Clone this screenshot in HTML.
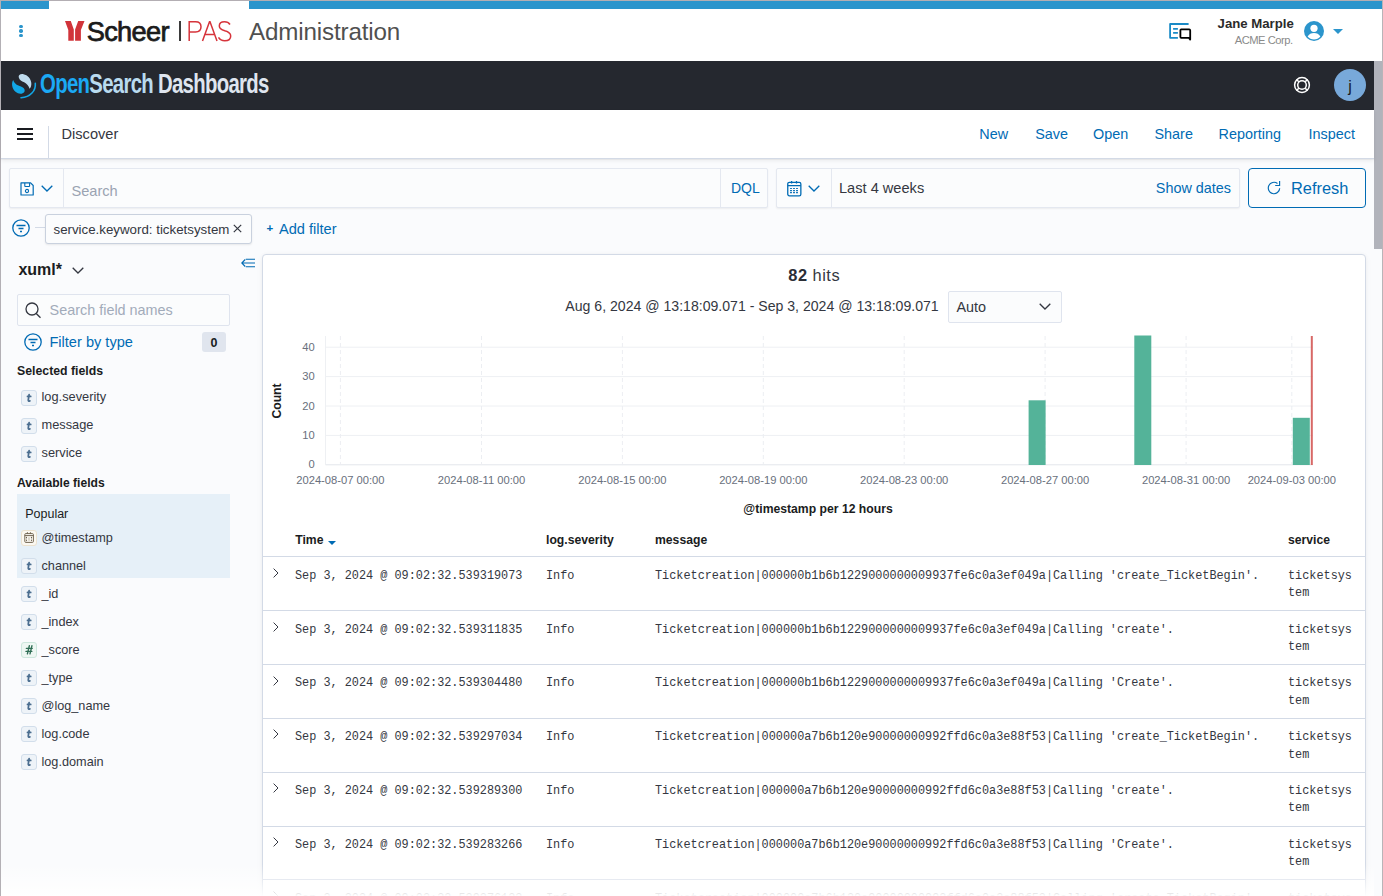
<!DOCTYPE html>
<html><head><meta charset="utf-8"><title>Discover - OpenSearch Dashboards</title>
<style>
html,body{margin:0;padding:0;}
body{width:1383px;height:896px;overflow:hidden;position:relative;background:#fafbfd;font-family:"Liberation Sans", sans-serif;}
.t{position:absolute;white-space:pre;line-height:1;}
.b{position:absolute;box-sizing:border-box;}
svg.b{overflow:visible;}
</style></head><body>
<div class="b" style="left:0.00px;top:0.00px;width:1383.00px;height:61.00px;background:#fff;"></div>
<div class="b" style="left:0.00px;top:0.00px;width:1383.00px;height:1.00px;background:#b3aeb3;"></div>
<div class="b" style="left:0.00px;top:0.00px;width:1.00px;height:896.00px;background:#b3b0b5;"></div>
<div class="b" style="left:1.00px;top:1.00px;width:48.00px;height:8.00px;background:#2b95cc;"></div>
<div class="b" style="left:249.00px;top:1.00px;width:1133.00px;height:8.00px;background:#2b95cc;"></div>
<div class="b" style="left:19.30px;top:24.90px;width:3.40px;height:3.40px;background:#2b95cc;border-radius:50%;"></div>
<div class="b" style="left:19.30px;top:29.20px;width:3.40px;height:3.40px;background:#2b95cc;border-radius:50%;"></div>
<div class="b" style="left:19.30px;top:33.50px;width:3.40px;height:3.40px;background:#2b95cc;border-radius:50%;"></div>
<svg class="b" style="left:62.00px;top:18.00px;" width="28" height="26" viewBox="0 0 28 26"><path d="M3 3H8.8L11.8 11.5V22.8H6.3V12Z M16.2 3H22.5L18.9 12V22.8H13.1V11.5Z" fill="#d1343a"/></svg>
<div class="t" style="left:86.80px;top:17.97px;font-size:27.20px;color:#1b1b1b;font-weight:400;font-family:'Liberation Sans', sans-serif;letter-spacing:-0.70px;-webkit-text-stroke:0.75px #1b1b1b;">Scheer</div>
<div class="b" style="left:179.00px;top:21.00px;width:1.60px;height:20.00px;background:#3b3b3b;"></div>
<svg class="b" style="left:188.00px;top:21.00px;" width="44" height="20" viewBox="0 0 44 20"><g fill="none" stroke="#d6343b" stroke-width="1.5"><path d="M1.2 20V0.8H7.5C11.5 0.8 13 3 13 5.8C13 8.7 11.5 11 7.5 11H1.2"/><path d="M14.5 20L21.5 0.8H22L29 20M17.3 13.5H26.2"/><path d="M42 3.5C40.8 1.6 39 0.8 36.5 0.8C33.5 0.8 31.3 2.4 31.3 5C31.3 7.8 33.6 8.8 36.8 9.8C40.3 10.8 42.7 12 42.7 15C42.7 18 40.3 19.8 36.8 19.8C34 19.8 31.8 18.6 30.5 16.4"/></g></svg>
<div class="t" style="left:249.00px;top:19.91px;font-size:24.20px;color:#505050;font-weight:400;font-family:'Liberation Sans', sans-serif;letter-spacing:-0.15px;">Administration</div>
<svg class="b" style="left:1164.00px;top:18.00px;" width="32" height="26" viewBox="0 0 32 26"><path d="M24.6 6H6.1V19.8H13.9" fill="none" stroke="#1a8ac6" stroke-width="1.8" stroke-linejoin="round"/><path d="M9.1 10.9H13.9M9.1 14.9H13.9" stroke="#1a8ac6" stroke-width="1.8"/><path d="M17.2 11.4H25.2Q26.2 11.4 26.2 12.4V21.6L24.8 19.8H17.2Q16.4 19.8 16.4 19V12.2Q16.4 11.4 17.2 11.4Z" fill="none" stroke="#000" stroke-width="1.8" stroke-linejoin="round"/></svg>
<div class="t" style="left:1193.80px;width:100px;text-align:right;top:17.22px;font-size:13.20px;color:#2b2b2b;font-weight:700;font-family:'Liberation Sans', sans-serif;">Jane Marple</div>
<div class="t" style="left:1192.50px;width:100px;text-align:right;top:35.02px;font-size:11.20px;color:#8a8a8a;font-weight:400;font-family:'Liberation Sans', sans-serif;letter-spacing:-0.50px;">ACME Corp.</div>
<svg class="b" style="left:1304.00px;top:21.00px;" width="20" height="20" viewBox="0 0 20 20"><circle cx="10" cy="10" r="10" fill="#2b95cc"/><circle cx="10" cy="7.3" r="3.6" fill="#fff"/><path d="M3.6 15.6C5 13 7.2 12 10 12C12.8 12 15 13 16.4 15.6C14.8 17.4 12.5 18.5 10 18.5C7.5 18.5 5.2 17.4 3.6 15.6Z" fill="#fff"/></svg>
<svg class="b" style="left:1333.00px;top:29.00px;" width="10" height="5" viewBox="0 0 10 5"><path d="M0 0H10L5 5Z" fill="#2b95cc"/></svg>
<div class="b" style="left:1.00px;top:61.00px;width:1373.00px;height:49.00px;background:#25282f;"></div>
<svg class="b" style="left:8.00px;top:68.00px;" width="36" height="36" viewBox="0 0 36 36"><path d="M10.8 9.5C10 7 12.5 5.6 15.5 6.2C19.5 7 23 10.5 23.3 15C23.5 17.5 22.8 19.8 21.6 20.8C20.8 18 18.8 15.5 16.2 14.3C13.6 13.1 11.5 12 10.8 9.5Z" fill="#bfdcee"/><path d="M5.2 12C3.2 15 3.8 20.5 7.5 23.8C10.2 26.2 14.5 26.5 16.3 24C17.5 22 16 19.8 13.5 18.8C10.5 17.6 6.5 16.5 5.2 12Z" fill="#12a7e6"/><path d="M27.3 15.3C28 22.5 22.5 29.3 13 29.8" fill="none" stroke="#12a7e6" stroke-width="1.6" stroke-linecap="round"/></svg>
<div class="t" style="left:40.00px;top:70.54px;font-size:27.00px;color:#dfe5ef;font-weight:700;font-family:'Liberation Sans', sans-serif;letter-spacing:-0.90px;transform:scaleX(0.753);transform-origin:0 0;"><span style="color:#1ba9f5">Open</span><span style="color:#b9dbef">Search</span> <span style="color:#dfe5ef">Dashboards</span></div>
<svg class="b" style="left:1293.00px;top:76.00px;" width="18" height="18" viewBox="0 0 18 18"><g fill="none" stroke="#ffffff" stroke-width="1.5"><circle cx="9" cy="9" r="7.4"/><circle cx="9" cy="9" r="4.3"/><path d="M3.5 3.5L5.8 5.8M14.5 3.5L12.2 5.8M3.5 14.5L5.8 12.2M14.5 14.5L12.2 12.2"/></g></svg>
<div class="b" style="left:1334.00px;top:69.00px;width:32.00px;height:32.00px;background:#78a9da;border-radius:50%;"></div>
<div class="t" style="left:1340.00px;width:20px;text-align:center;top:78.75px;font-size:16.00px;color:#1a1c21;font-weight:400;font-family:'Liberation Sans', sans-serif;">j</div>
<div class="b" style="left:1374.00px;top:61.00px;width:8.00px;height:835.00px;background:#fafbfd;"></div>
<div class="b" style="left:1374.00px;top:61.00px;width:8.00px;height:188.00px;background:#b1b3bb;"></div>
<div class="b" style="left:1382.00px;top:0.00px;width:1.00px;height:896.00px;background:#b8b4b8;"></div>
<div class="b" style="left:1.00px;top:110.00px;width:1373.00px;height:49.00px;background:#fff;border-bottom:1px solid #d3dae6;box-shadow:0 2px 4px rgba(0,0,0,0.06),0 1px 1px rgba(0,0,0,0.04);"></div>
<div class="b" style="left:17.00px;top:128.00px;width:16.00px;height:2.00px;background:#1a1c21;"></div>
<div class="b" style="left:17.00px;top:133.00px;width:16.00px;height:2.00px;background:#1a1c21;"></div>
<div class="b" style="left:17.00px;top:138.00px;width:16.00px;height:2.00px;background:#1a1c21;"></div>
<div class="b" style="left:48.00px;top:126.00px;width:1.00px;height:32.00px;background:#d3dae6;"></div>
<div class="t" style="left:61.50px;top:126.54px;font-size:14.60px;color:#343741;font-weight:400;font-family:'Liberation Sans', sans-serif;">Discover</div>
<div class="t" style="left:979.30px;top:127.31px;font-size:14.40px;color:#006bb4;font-weight:400;font-family:'Liberation Sans', sans-serif;">New</div>
<div class="t" style="left:1035.20px;top:127.31px;font-size:14.40px;color:#006bb4;font-weight:400;font-family:'Liberation Sans', sans-serif;">Save</div>
<div class="t" style="left:1093.00px;top:127.31px;font-size:14.40px;color:#006bb4;font-weight:400;font-family:'Liberation Sans', sans-serif;">Open</div>
<div class="t" style="left:1154.50px;top:127.31px;font-size:14.40px;color:#006bb4;font-weight:400;font-family:'Liberation Sans', sans-serif;">Share</div>
<div class="t" style="left:1218.50px;top:127.31px;font-size:14.40px;color:#006bb4;font-weight:400;font-family:'Liberation Sans', sans-serif;">Reporting</div>
<div class="t" style="left:1308.50px;top:127.31px;font-size:14.40px;color:#006bb4;font-weight:400;font-family:'Liberation Sans', sans-serif;">Inspect</div>
<div class="b" style="left:9.00px;top:168.00px;width:759.00px;height:40.00px;background:#fbfcfd;border:1px solid #e4e8f0;box-shadow:0 1px 2px rgba(0,0,0,0.06);border-radius:2px;"></div>
<div class="b" style="left:63.00px;top:169.00px;width:1.00px;height:38.00px;background:#e4e8f0;"></div>
<div class="b" style="left:720.00px;top:169.00px;width:1.00px;height:38.00px;background:#e4e8f0;"></div>
<svg class="b" style="left:20.00px;top:182.00px;" width="15" height="15" viewBox="0 0 15 15"><path d="M1 0.9H10.6L13.2 3.5V13H1Z" fill="none" stroke="#006bb4" stroke-width="1.2" stroke-linejoin="round"/><path d="M4.8 0.9V3.9Q4.8 4.5 5.4 4.5H9Q9.6 4.5 9.6 3.9V0.9" fill="none" stroke="#006bb4" stroke-width="1.1"/><circle cx="7" cy="9" r="1.6" fill="none" stroke="#006bb4" stroke-width="1.1"/></svg>
<svg class="b" style="left:41.00px;top:184.70px;" width="12" height="7" viewBox="0 0 12 7"><path d="M0.7 0.7L6 6L11.3 0.7" fill="none" stroke="#006bb4" stroke-width="1.3"/></svg>
<div class="t" style="left:71.50px;top:184.04px;font-size:14.60px;color:#9aa3b2;font-weight:400;font-family:'Liberation Sans', sans-serif;">Search</div>
<div class="t" style="left:731.00px;top:181.45px;font-size:14.00px;color:#006bb4;font-weight:400;font-family:'Liberation Sans', sans-serif;">DQL</div>
<div class="b" style="left:776.00px;top:168.00px;width:464.00px;height:40.00px;background:#fbfcfd;border:1px solid #e4e8f0;box-shadow:0 1px 2px rgba(0,0,0,0.06);border-radius:2px;"></div>
<div class="b" style="left:830.50px;top:169.00px;width:1.00px;height:38.00px;background:#e4e8f0;"></div>
<svg class="b" style="left:787.00px;top:181.00px;" width="15" height="16" viewBox="0 0 15 16"><rect x="0.75" y="1.3" width="13.1" height="13.5" rx="1.6" fill="none" stroke="#006bb4" stroke-width="1.3"/><path d="M0.75 4.6H13.85M4.6 0V2.6M9.5 0V2.6" stroke="#006bb4" stroke-width="1.3"/><g fill="#006bb4"><rect x="3" y="6.9" width="2" height="1.2" rx="0.5"/><rect x="6" y="6.9" width="2" height="1.2" rx="0.5"/><rect x="9" y="6.9" width="2" height="1.2" rx="0.5"/><rect x="3" y="9" width="2" height="1.2" rx="0.5"/><rect x="6" y="9" width="2" height="1.2" rx="0.5"/><rect x="9" y="9" width="2" height="1.2" rx="0.5"/><rect x="3" y="11" width="2" height="1.2" rx="0.5"/><rect x="6" y="11" width="2" height="1.2" rx="0.5"/><rect x="9" y="11" width="2" height="1.2" rx="0.5"/></g></svg>
<svg class="b" style="left:808.00px;top:184.60px;" width="12" height="7" viewBox="0 0 12 7"><path d="M0.7 0.7L6 6L11.3 0.7" fill="none" stroke="#006bb4" stroke-width="1.3"/></svg>
<div class="t" style="left:839.00px;top:181.14px;font-size:14.60px;color:#343741;font-weight:400;font-family:'Liberation Sans', sans-serif;">Last 4 weeks</div>
<div class="t" style="left:1111.00px;width:120px;text-align:right;top:181.31px;font-size:14.40px;color:#006bb4;font-weight:400;font-family:'Liberation Sans', sans-serif;">Show dates</div>
<div class="b" style="left:1248.00px;top:168.00px;width:118.00px;height:40.00px;background:#fbfcfd;border:1px solid #006bb4;border-radius:4px;"></div>
<svg class="b" style="left:1267.00px;top:181.00px;" width="14" height="14" viewBox="0 0 14 14"><path d="M10.5 2.5A5.7 5.7 0 1 0 12.7 7.2" fill="none" stroke="#006bb4" stroke-width="1.15"/><path d="M12.6 0V4.5H8.2" fill="none" stroke="#006bb4" stroke-width="1.15"/></svg>
<div class="t" style="left:1291.00px;top:180.11px;font-size:16.40px;color:#006bb4;font-weight:400;font-family:'Liberation Sans', sans-serif;">Refresh</div>
<svg class="b" style="left:12.00px;top:219.00px;" width="18" height="18" viewBox="0 0 18 18"><circle cx="9" cy="9" r="8.2" fill="none" stroke="#006bb4" stroke-width="1.3"/><path d="M4.5 6.5H13.5M6.5 9.5H11.5M8 12.5H10" stroke="#006bb4" stroke-width="1.3"/></svg>
<div class="b" style="left:35.00px;top:227.00px;width:10.00px;height:1.00px;background:#d3dae6;"></div>
<div class="b" style="left:45.00px;top:214.00px;width:207.00px;height:30.00px;background:#fbfcfd;border:1px solid #c9d1de;border-radius:3px;box-shadow:0 1px 2px rgba(0,0,0,0.08);"></div>
<div class="t" style="left:53.50px;top:222.74px;font-size:13.30px;color:#343741;font-weight:400;font-family:'Liberation Sans', sans-serif;">service.keyword: ticketsystem</div>
<svg class="b" style="left:233.00px;top:224.00px;" width="9" height="9" viewBox="0 0 9 9"><path d="M0.8 0.8L8.2 8.2M8.2 0.8L0.8 8.2" stroke="#343741" stroke-width="1.2"/></svg>
<div class="t" style="left:266.50px;top:223.46px;font-size:11.50px;color:#006bb4;font-weight:700;font-family:'Liberation Sans', sans-serif;">+</div>
<div class="t" style="left:279.00px;top:221.64px;font-size:14.60px;color:#006bb4;font-weight:400;font-family:'Liberation Sans', sans-serif;">Add filter</div>
<div class="t" style="left:18.40px;top:262.45px;font-size:16.00px;color:#1a1c21;font-weight:700;font-family:'Liberation Sans', sans-serif;">xuml*</div>
<svg class="b" style="left:72.00px;top:267.00px;" width="12" height="7" viewBox="0 0 12 7"><path d="M0.7 0.7L6 6L11.3 0.7" fill="none" stroke="#343741" stroke-width="1.3"/></svg>
<svg class="b" style="left:241.00px;top:258.00px;" width="15" height="10" viewBox="0 0 15 10"><path d="M4.2 1.5L0.8 5L4.2 8.5M0.8 5H14M4.8 1.2H14M4.8 8.8H14" fill="none" stroke="#006bb4" stroke-width="1.1"/></svg>
<div class="b" style="left:17.00px;top:294.00px;width:213.00px;height:32.00px;background:#fbfcfd;border:1px solid #dfe4ee;border-radius:2px;"></div>
<svg class="b" style="left:25.00px;top:302.00px;" width="17" height="17" viewBox="0 0 17 17"><circle cx="7" cy="7" r="6" fill="none" stroke="#343741" stroke-width="1.3"/><path d="M11.2 11.5L15.5 15.8" stroke="#343741" stroke-width="1.3"/></svg>
<div class="t" style="left:49.60px;top:302.81px;font-size:14.40px;color:#a2abba;font-weight:400;font-family:'Liberation Sans', sans-serif;">Search field names</div>
<svg class="b" style="left:24.00px;top:333.00px;" width="18" height="18" viewBox="0 0 18 18"><circle cx="9" cy="9" r="8.2" fill="none" stroke="#006bb4" stroke-width="1.3"/><path d="M4.5 6.5H13.5M6.5 9.5H11.5M8 12.5H10" stroke="#006bb4" stroke-width="1.3"/></svg>
<div class="t" style="left:49.40px;top:334.74px;font-size:14.60px;color:#006bb4;font-weight:400;font-family:'Liberation Sans', sans-serif;">Filter by type</div>
<div class="b" style="left:202.00px;top:332.00px;width:24.00px;height:20.00px;background:#e0e5ee;border-radius:3px;"></div>
<div class="t" style="left:204.00px;width:20px;text-align:center;top:336.72px;font-size:12.50px;color:#1a1c21;font-weight:700;font-family:'Liberation Sans', sans-serif;">0</div>
<div class="t" style="left:17.00px;top:365.19px;font-size:12.30px;color:#1a1c21;font-weight:700;font-family:'Liberation Sans', sans-serif;">Selected fields</div>
<div class="t" style="left:17.00px;top:477.15px;font-size:12.10px;color:#1a1c21;font-weight:700;font-family:'Liberation Sans', sans-serif;">Available fields</div>
<div class="b" style="left:17.00px;top:494.00px;width:213.00px;height:84.00px;background:#e6f0f8;"></div>
<div class="t" style="left:25.20px;top:508.32px;font-size:12.50px;color:#1a1c21;font-weight:400;font-family:'Liberation Sans', sans-serif;">Popular</div>
<div class="b" style="left:21.00px;top:390.00px;width:16.00px;height:16.00px;background:#eef3f8;border:1px solid #d2deeb;border-radius:3px;"></div>
<svg class="b" style="left:21.00px;top:390.00px;" width="16" height="16" viewBox="0 0 16 16"><path d="M8.1 4.6L7.3 9.8Q7.1 11.5 8.9 10.9M6.5 6.4H9.7" fill="none" stroke="#4a6d8f" stroke-width="1.75" stroke-linecap="round" stroke-linejoin="round"/></svg>
<div class="t" style="left:41.50px;top:391.26px;font-size:12.80px;color:#343741;font-weight:400;font-family:'Liberation Sans', sans-serif;">log.severity</div>
<div class="b" style="left:21.00px;top:418.00px;width:16.00px;height:16.00px;background:#eef3f8;border:1px solid #d2deeb;border-radius:3px;"></div>
<svg class="b" style="left:21.00px;top:418.00px;" width="16" height="16" viewBox="0 0 16 16"><path d="M8.1 4.6L7.3 9.8Q7.1 11.5 8.9 10.9M6.5 6.4H9.7" fill="none" stroke="#4a6d8f" stroke-width="1.75" stroke-linecap="round" stroke-linejoin="round"/></svg>
<div class="t" style="left:41.50px;top:419.26px;font-size:12.80px;color:#343741;font-weight:400;font-family:'Liberation Sans', sans-serif;">message</div>
<div class="b" style="left:21.00px;top:446.00px;width:16.00px;height:16.00px;background:#eef3f8;border:1px solid #d2deeb;border-radius:3px;"></div>
<svg class="b" style="left:21.00px;top:446.00px;" width="16" height="16" viewBox="0 0 16 16"><path d="M8.1 4.6L7.3 9.8Q7.1 11.5 8.9 10.9M6.5 6.4H9.7" fill="none" stroke="#4a6d8f" stroke-width="1.75" stroke-linecap="round" stroke-linejoin="round"/></svg>
<div class="t" style="left:41.50px;top:447.26px;font-size:12.80px;color:#343741;font-weight:400;font-family:'Liberation Sans', sans-serif;">service</div>
<div class="b" style="left:21.00px;top:530.00px;width:16.00px;height:16.00px;background:#fbf8f1;border:1px solid #ece2cf;border-radius:3px;"></div>
<svg class="b" style="left:21.00px;top:530.00px;" width="16" height="16" viewBox="0 0 16 16"><rect x="3.8" y="3.6" width="8.6" height="8.8" rx="1" fill="none" stroke="#6b604c" stroke-width="0.95"/><path d="M3.8 5.6H12.4M6.4 2.2V3.8M9.4 2.2V3.8" stroke="#6b604c" stroke-width="0.95"/><path d="M5.5 7.4V10.6M10.5 7.4V10.6" stroke="#6b604c" stroke-width="0.6" opacity="0.6"/><path d="M8 7.2V10.8" stroke="#a39a8a" stroke-width="1.4" opacity="0.5"/><g fill="#6b604c"><circle cx="5.5" cy="7.4" r="0.6"/><circle cx="10.5" cy="7.4" r="0.6"/><circle cx="5.5" cy="10.6" r="0.6"/><circle cx="10.5" cy="10.6" r="0.6"/></g></svg>
<div class="t" style="left:41.50px;top:531.55px;font-size:12.70px;color:#343741;font-weight:400;font-family:'Liberation Sans', sans-serif;">@timestamp</div>
<div class="b" style="left:21.00px;top:558.00px;width:16.00px;height:16.00px;background:#eef3f8;border:1px solid #d2deeb;border-radius:3px;"></div>
<svg class="b" style="left:21.00px;top:558.00px;" width="16" height="16" viewBox="0 0 16 16"><path d="M8.1 4.6L7.3 9.8Q7.1 11.5 8.9 10.9M6.5 6.4H9.7" fill="none" stroke="#4a6d8f" stroke-width="1.75" stroke-linecap="round" stroke-linejoin="round"/></svg>
<div class="t" style="left:41.50px;top:559.55px;font-size:12.70px;color:#343741;font-weight:400;font-family:'Liberation Sans', sans-serif;">channel</div>
<div class="b" style="left:21.00px;top:586.00px;width:16.00px;height:16.00px;background:#eef3f8;border:1px solid #d2deeb;border-radius:3px;"></div>
<svg class="b" style="left:21.00px;top:586.00px;" width="16" height="16" viewBox="0 0 16 16"><path d="M8.1 4.6L7.3 9.8Q7.1 11.5 8.9 10.9M6.5 6.4H9.7" fill="none" stroke="#4a6d8f" stroke-width="1.75" stroke-linecap="round" stroke-linejoin="round"/></svg>
<div class="t" style="left:41.50px;top:587.55px;font-size:12.70px;color:#343741;font-weight:400;font-family:'Liberation Sans', sans-serif;">_id</div>
<div class="b" style="left:21.00px;top:614.00px;width:16.00px;height:16.00px;background:#eef3f8;border:1px solid #d2deeb;border-radius:3px;"></div>
<svg class="b" style="left:21.00px;top:614.00px;" width="16" height="16" viewBox="0 0 16 16"><path d="M8.1 4.6L7.3 9.8Q7.1 11.5 8.9 10.9M6.5 6.4H9.7" fill="none" stroke="#4a6d8f" stroke-width="1.75" stroke-linecap="round" stroke-linejoin="round"/></svg>
<div class="t" style="left:41.50px;top:615.55px;font-size:12.70px;color:#343741;font-weight:400;font-family:'Liberation Sans', sans-serif;">_index</div>
<div class="b" style="left:21.00px;top:642.00px;width:16.00px;height:16.00px;background:#eef7f3;border:1px solid #cde7dd;border-radius:3px;"></div>
<svg class="b" style="left:21.00px;top:642.00px;" width="16" height="16" viewBox="0 0 16 16"><path d="M8.3 3.8L6.4 11.8M10.9 3.8L9 11.8M5.4 6.4H11.2M5 9.4H10.8" fill="none" stroke="#2f6e55" stroke-width="1.4" stroke-linecap="round"/></svg>
<div class="t" style="left:41.50px;top:643.55px;font-size:12.70px;color:#343741;font-weight:400;font-family:'Liberation Sans', sans-serif;">_score</div>
<div class="b" style="left:21.00px;top:670.00px;width:16.00px;height:16.00px;background:#eef3f8;border:1px solid #d2deeb;border-radius:3px;"></div>
<svg class="b" style="left:21.00px;top:670.00px;" width="16" height="16" viewBox="0 0 16 16"><path d="M8.1 4.6L7.3 9.8Q7.1 11.5 8.9 10.9M6.5 6.4H9.7" fill="none" stroke="#4a6d8f" stroke-width="1.75" stroke-linecap="round" stroke-linejoin="round"/></svg>
<div class="t" style="left:41.50px;top:671.55px;font-size:12.70px;color:#343741;font-weight:400;font-family:'Liberation Sans', sans-serif;">_type</div>
<div class="b" style="left:21.00px;top:698.00px;width:16.00px;height:16.00px;background:#eef3f8;border:1px solid #d2deeb;border-radius:3px;"></div>
<svg class="b" style="left:21.00px;top:698.00px;" width="16" height="16" viewBox="0 0 16 16"><path d="M8.1 4.6L7.3 9.8Q7.1 11.5 8.9 10.9M6.5 6.4H9.7" fill="none" stroke="#4a6d8f" stroke-width="1.75" stroke-linecap="round" stroke-linejoin="round"/></svg>
<div class="t" style="left:41.50px;top:699.55px;font-size:12.70px;color:#343741;font-weight:400;font-family:'Liberation Sans', sans-serif;">@log_name</div>
<div class="b" style="left:21.00px;top:726.00px;width:16.00px;height:16.00px;background:#eef3f8;border:1px solid #d2deeb;border-radius:3px;"></div>
<svg class="b" style="left:21.00px;top:726.00px;" width="16" height="16" viewBox="0 0 16 16"><path d="M8.1 4.6L7.3 9.8Q7.1 11.5 8.9 10.9M6.5 6.4H9.7" fill="none" stroke="#4a6d8f" stroke-width="1.75" stroke-linecap="round" stroke-linejoin="round"/></svg>
<div class="t" style="left:41.50px;top:727.55px;font-size:12.70px;color:#343741;font-weight:400;font-family:'Liberation Sans', sans-serif;">log.code</div>
<div class="b" style="left:21.00px;top:754.00px;width:16.00px;height:16.00px;background:#eef3f8;border:1px solid #d2deeb;border-radius:3px;"></div>
<svg class="b" style="left:21.00px;top:754.00px;" width="16" height="16" viewBox="0 0 16 16"><path d="M8.1 4.6L7.3 9.8Q7.1 11.5 8.9 10.9M6.5 6.4H9.7" fill="none" stroke="#4a6d8f" stroke-width="1.75" stroke-linecap="round" stroke-linejoin="round"/></svg>
<div class="t" style="left:41.50px;top:755.55px;font-size:12.70px;color:#343741;font-weight:400;font-family:'Liberation Sans', sans-serif;">log.domain</div>
<div class="b" style="left:262.00px;top:254.00px;width:1104.00px;height:700.00px;background:#fff;border:1px solid #d3dae6;border-radius:4px;box-shadow:0 0.9px 4px -1px rgba(0,0,0,0.06),0 2.6px 8px -1px rgba(0,0,0,0.05);"></div>
<div class="t" style="left:788.30px;top:267.11px;font-size:16.40px;color:#343741;font-weight:400;font-family:'Liberation Sans', sans-serif;letter-spacing:0.50px;"><b style="font-weight:700;color:#2b2e36">82</b> hits</div>
<div class="t" style="left:565.30px;top:299.46px;font-size:14.10px;color:#343741;font-weight:400;font-family:'Liberation Sans', sans-serif;">Aug 6, 2024 @ 13:18:09.071 - Sep 3, 2024 @ 13:18:09.071</div>
<div class="b" style="left:948.00px;top:291.00px;width:114.00px;height:32.00px;background:#fbfcfd;border:1px solid #dfe4ee;border-radius:2px;"></div>
<div class="t" style="left:956.50px;top:300.31px;font-size:14.40px;color:#343741;font-weight:400;font-family:'Liberation Sans', sans-serif;">Auto</div>
<svg class="b" style="left:1039.00px;top:303.00px;" width="12" height="7" viewBox="0 0 12 7"><path d="M0.7 0.7L6 6L11.3 0.7" fill="none" stroke="#343741" stroke-width="1.3"/></svg>
<svg class="b" style="left:0;top:0" width="1383" height="896" viewBox="0 0 1383 896"><path d="M325.5 347.2H1313.0" stroke="#eef0f3" stroke-width="1"/><path d="M325.5 376.6H1313.0" stroke="#eef0f3" stroke-width="1"/><path d="M325.5 406.0H1313.0" stroke="#eef0f3" stroke-width="1"/><path d="M325.5 435.4H1313.0" stroke="#eef0f3" stroke-width="1"/><path d="M325.5 464.8H1313.0" stroke="#e3e6eb" stroke-width="1"/><path d="M325.5 336V465" stroke="#eef0f3" stroke-width="1"/><path d="M340.4 336V465" stroke="#eceef2" stroke-width="1" stroke-dasharray="4 3"/><path d="M481.5 336V465" stroke="#eceef2" stroke-width="1" stroke-dasharray="4 3"/><path d="M622.4 336V465" stroke="#eceef2" stroke-width="1" stroke-dasharray="4 3"/><path d="M763.3 336V465" stroke="#eceef2" stroke-width="1" stroke-dasharray="4 3"/><path d="M904.2 336V465" stroke="#eceef2" stroke-width="1" stroke-dasharray="4 3"/><path d="M1045.1 336V465" stroke="#eceef2" stroke-width="1" stroke-dasharray="4 3"/><path d="M1186.1 336V465" stroke="#eceef2" stroke-width="1" stroke-dasharray="4 3"/><path d="M1291.8 336V465" stroke="#eceef2" stroke-width="1" stroke-dasharray="4 3"/><rect x="1028.6" y="400.3" width="17" height="64.7" fill="#54b399"/><rect x="1134.3" y="335.5" width="17" height="129.5" fill="#54b399"/><rect x="1292.8" y="417.8" width="17" height="47.2" fill="#54b399"/><path d="M1311.8 336V465" stroke="#d6605e" stroke-width="2" opacity="0.95"/></svg>
<div class="t" style="left:284.80px;width:30px;text-align:right;top:341.72px;font-size:11.20px;color:#69707d;font-weight:400;font-family:'Liberation Sans', sans-serif;">40</div>
<div class="t" style="left:284.80px;width:30px;text-align:right;top:371.12px;font-size:11.20px;color:#69707d;font-weight:400;font-family:'Liberation Sans', sans-serif;">30</div>
<div class="t" style="left:284.80px;width:30px;text-align:right;top:400.52px;font-size:11.20px;color:#69707d;font-weight:400;font-family:'Liberation Sans', sans-serif;">20</div>
<div class="t" style="left:284.80px;width:30px;text-align:right;top:429.92px;font-size:11.20px;color:#69707d;font-weight:400;font-family:'Liberation Sans', sans-serif;">10</div>
<div class="t" style="left:284.80px;width:30px;text-align:right;top:459.32px;font-size:11.20px;color:#69707d;font-weight:400;font-family:'Liberation Sans', sans-serif;">0</div>
<div class="t" style="left:280.40px;width:120px;text-align:center;top:475.02px;font-size:11.20px;color:#69707d;font-weight:400;font-family:'Liberation Sans', sans-serif;">2024-08-07 00:00</div>
<div class="t" style="left:421.50px;width:120px;text-align:center;top:475.02px;font-size:11.20px;color:#69707d;font-weight:400;font-family:'Liberation Sans', sans-serif;">2024-08-11 00:00</div>
<div class="t" style="left:562.40px;width:120px;text-align:center;top:475.02px;font-size:11.20px;color:#69707d;font-weight:400;font-family:'Liberation Sans', sans-serif;">2024-08-15 00:00</div>
<div class="t" style="left:703.30px;width:120px;text-align:center;top:475.02px;font-size:11.20px;color:#69707d;font-weight:400;font-family:'Liberation Sans', sans-serif;">2024-08-19 00:00</div>
<div class="t" style="left:844.20px;width:120px;text-align:center;top:475.02px;font-size:11.20px;color:#69707d;font-weight:400;font-family:'Liberation Sans', sans-serif;">2024-08-23 00:00</div>
<div class="t" style="left:985.10px;width:120px;text-align:center;top:475.02px;font-size:11.20px;color:#69707d;font-weight:400;font-family:'Liberation Sans', sans-serif;">2024-08-27 00:00</div>
<div class="t" style="left:1126.10px;width:120px;text-align:center;top:475.02px;font-size:11.20px;color:#69707d;font-weight:400;font-family:'Liberation Sans', sans-serif;">2024-08-31 00:00</div>
<div class="t" style="left:1231.80px;width:120px;text-align:center;top:475.02px;font-size:11.20px;color:#69707d;font-weight:400;font-family:'Liberation Sans', sans-serif;">2024-09-03 00:00</div>
<div class="t" style="left:241.00px;width:60px;text-align:center;top:401.17px;font-size:12.20px;color:#1a1c21;font-weight:700;font-family:'Liberation Sans', sans-serif;transform:rotate(-90deg);transform-origin:50% 0;">Count</div>
<div class="t" style="left:698.00px;width:240px;text-align:center;top:502.57px;font-size:12.20px;color:#1a1c21;font-weight:700;font-family:'Liberation Sans', sans-serif;">@timestamp per 12 hours</div>
<div class="t" style="left:295.20px;top:534.17px;font-size:12.20px;color:#1a1c21;font-weight:700;font-family:'Liberation Sans', sans-serif;">Time</div>
<svg class="b" style="left:328.00px;top:540.50px;" width="8" height="4" viewBox="0 0 8 4"><path d="M0 0H8L4 4Z" fill="#006bb4"/></svg>
<div class="t" style="left:546.00px;top:534.17px;font-size:12.20px;color:#1a1c21;font-weight:700;font-family:'Liberation Sans', sans-serif;">log.severity</div>
<div class="t" style="left:655.00px;top:534.17px;font-size:12.20px;color:#1a1c21;font-weight:700;font-family:'Liberation Sans', sans-serif;">message</div>
<div class="t" style="left:1288.00px;top:534.17px;font-size:12.20px;color:#1a1c21;font-weight:700;font-family:'Liberation Sans', sans-serif;">service</div>
<div class="b" style="left:263.00px;top:556.00px;width:1102.00px;height:1.00px;background:#d3dae6;"></div>
<svg class="b" style="left:272.50px;top:567.80px;" width="6" height="10" viewBox="0 0 6 10"><path d="M0.6 0.6L5 5L0.6 9.4" fill="none" stroke="#343741" stroke-width="1"/></svg>
<div class="t" style="left:295.00px;top:570.72px;font-size:11.85px;color:#343741;font-weight:400;font-family:'Liberation Mono', monospace;">Sep 3, 2024 @ 09:02:32.539319073</div>
<div class="t" style="left:546.00px;top:570.72px;font-size:11.85px;color:#343741;font-weight:400;font-family:'Liberation Mono', monospace;">Info</div>
<div class="t" style="left:655.00px;top:570.72px;font-size:11.85px;color:#343741;font-weight:400;font-family:'Liberation Mono', monospace;">Ticketcreation|000000b1b6b1229000000009937fe6c0a3ef049a|Calling &#x27;create_TicketBegin&#x27;.</div>
<div class="t" style="left:1288.00px;top:570.72px;font-size:11.85px;color:#343741;font-weight:400;font-family:'Liberation Mono', monospace;">ticketsys</div>
<div class="t" style="left:1288.00px;top:587.92px;font-size:11.85px;color:#343741;font-weight:400;font-family:'Liberation Mono', monospace;">tem</div>
<div class="b" style="left:263.00px;top:610.00px;width:1102.00px;height:1.00px;background:#d3dae6;"></div>
<svg class="b" style="left:272.50px;top:621.66px;" width="6" height="10" viewBox="0 0 6 10"><path d="M0.6 0.6L5 5L0.6 9.4" fill="none" stroke="#343741" stroke-width="1"/></svg>
<div class="t" style="left:295.00px;top:624.58px;font-size:11.85px;color:#343741;font-weight:400;font-family:'Liberation Mono', monospace;">Sep 3, 2024 @ 09:02:32.539311835</div>
<div class="t" style="left:546.00px;top:624.58px;font-size:11.85px;color:#343741;font-weight:400;font-family:'Liberation Mono', monospace;">Info</div>
<div class="t" style="left:655.00px;top:624.58px;font-size:11.85px;color:#343741;font-weight:400;font-family:'Liberation Mono', monospace;">Ticketcreation|000000b1b6b1229000000009937fe6c0a3ef049a|Calling &#x27;create&#x27;.</div>
<div class="t" style="left:1288.00px;top:624.58px;font-size:11.85px;color:#343741;font-weight:400;font-family:'Liberation Mono', monospace;">ticketsys</div>
<div class="t" style="left:1288.00px;top:641.78px;font-size:11.85px;color:#343741;font-weight:400;font-family:'Liberation Mono', monospace;">tem</div>
<div class="b" style="left:263.00px;top:664.00px;width:1102.00px;height:1.00px;background:#d3dae6;"></div>
<svg class="b" style="left:272.50px;top:675.52px;" width="6" height="10" viewBox="0 0 6 10"><path d="M0.6 0.6L5 5L0.6 9.4" fill="none" stroke="#343741" stroke-width="1"/></svg>
<div class="t" style="left:295.00px;top:678.44px;font-size:11.85px;color:#343741;font-weight:400;font-family:'Liberation Mono', monospace;">Sep 3, 2024 @ 09:02:32.539304480</div>
<div class="t" style="left:546.00px;top:678.44px;font-size:11.85px;color:#343741;font-weight:400;font-family:'Liberation Mono', monospace;">Info</div>
<div class="t" style="left:655.00px;top:678.44px;font-size:11.85px;color:#343741;font-weight:400;font-family:'Liberation Mono', monospace;">Ticketcreation|000000b1b6b1229000000009937fe6c0a3ef049a|Calling &#x27;Create&#x27;.</div>
<div class="t" style="left:1288.00px;top:678.44px;font-size:11.85px;color:#343741;font-weight:400;font-family:'Liberation Mono', monospace;">ticketsys</div>
<div class="t" style="left:1288.00px;top:695.64px;font-size:11.85px;color:#343741;font-weight:400;font-family:'Liberation Mono', monospace;">tem</div>
<div class="b" style="left:263.00px;top:718.00px;width:1102.00px;height:1.00px;background:#d3dae6;"></div>
<svg class="b" style="left:272.50px;top:729.38px;" width="6" height="10" viewBox="0 0 6 10"><path d="M0.6 0.6L5 5L0.6 9.4" fill="none" stroke="#343741" stroke-width="1"/></svg>
<div class="t" style="left:295.00px;top:732.30px;font-size:11.85px;color:#343741;font-weight:400;font-family:'Liberation Mono', monospace;">Sep 3, 2024 @ 09:02:32.539297034</div>
<div class="t" style="left:546.00px;top:732.30px;font-size:11.85px;color:#343741;font-weight:400;font-family:'Liberation Mono', monospace;">Info</div>
<div class="t" style="left:655.00px;top:732.30px;font-size:11.85px;color:#343741;font-weight:400;font-family:'Liberation Mono', monospace;">Ticketcreation|000000a7b6b120e90000000992ffd6c0a3e88f53|Calling &#x27;create_TicketBegin&#x27;.</div>
<div class="t" style="left:1288.00px;top:732.30px;font-size:11.85px;color:#343741;font-weight:400;font-family:'Liberation Mono', monospace;">ticketsys</div>
<div class="t" style="left:1288.00px;top:749.50px;font-size:11.85px;color:#343741;font-weight:400;font-family:'Liberation Mono', monospace;">tem</div>
<div class="b" style="left:263.00px;top:772.00px;width:1102.00px;height:1.00px;background:#d3dae6;"></div>
<svg class="b" style="left:272.50px;top:783.24px;" width="6" height="10" viewBox="0 0 6 10"><path d="M0.6 0.6L5 5L0.6 9.4" fill="none" stroke="#343741" stroke-width="1"/></svg>
<div class="t" style="left:295.00px;top:786.16px;font-size:11.85px;color:#343741;font-weight:400;font-family:'Liberation Mono', monospace;">Sep 3, 2024 @ 09:02:32.539289300</div>
<div class="t" style="left:546.00px;top:786.16px;font-size:11.85px;color:#343741;font-weight:400;font-family:'Liberation Mono', monospace;">Info</div>
<div class="t" style="left:655.00px;top:786.16px;font-size:11.85px;color:#343741;font-weight:400;font-family:'Liberation Mono', monospace;">Ticketcreation|000000a7b6b120e90000000992ffd6c0a3e88f53|Calling &#x27;create&#x27;.</div>
<div class="t" style="left:1288.00px;top:786.16px;font-size:11.85px;color:#343741;font-weight:400;font-family:'Liberation Mono', monospace;">ticketsys</div>
<div class="t" style="left:1288.00px;top:803.36px;font-size:11.85px;color:#343741;font-weight:400;font-family:'Liberation Mono', monospace;">tem</div>
<div class="b" style="left:263.00px;top:826.00px;width:1102.00px;height:1.00px;background:#d3dae6;"></div>
<svg class="b" style="left:272.50px;top:837.10px;" width="6" height="10" viewBox="0 0 6 10"><path d="M0.6 0.6L5 5L0.6 9.4" fill="none" stroke="#343741" stroke-width="1"/></svg>
<div class="t" style="left:295.00px;top:840.02px;font-size:11.85px;color:#343741;font-weight:400;font-family:'Liberation Mono', monospace;">Sep 3, 2024 @ 09:02:32.539283266</div>
<div class="t" style="left:546.00px;top:840.02px;font-size:11.85px;color:#343741;font-weight:400;font-family:'Liberation Mono', monospace;">Info</div>
<div class="t" style="left:655.00px;top:840.02px;font-size:11.85px;color:#343741;font-weight:400;font-family:'Liberation Mono', monospace;">Ticketcreation|000000a7b6b120e90000000992ffd6c0a3e88f53|Calling &#x27;Create&#x27;.</div>
<div class="t" style="left:1288.00px;top:840.02px;font-size:11.85px;color:#343741;font-weight:400;font-family:'Liberation Mono', monospace;">ticketsys</div>
<div class="t" style="left:1288.00px;top:857.22px;font-size:11.85px;color:#343741;font-weight:400;font-family:'Liberation Mono', monospace;">tem</div>
<div class="b" style="left:263.00px;top:879.00px;width:1102.00px;height:1.00px;background:#d3dae6;"></div>
<svg class="b" style="left:272.50px;top:890.96px;" width="6" height="10" viewBox="0 0 6 10"><path d="M0.6 0.6L5 5L0.6 9.4" fill="none" stroke="#343741" stroke-width="1"/></svg>
<div class="t" style="left:295.00px;top:893.88px;font-size:11.85px;color:#343741;font-weight:400;font-family:'Liberation Mono', monospace;">Sep 3, 2024 @ 09:02:32.539276123</div>
<div class="t" style="left:546.00px;top:893.88px;font-size:11.85px;color:#343741;font-weight:400;font-family:'Liberation Mono', monospace;">Info</div>
<div class="t" style="left:655.00px;top:893.88px;font-size:11.85px;color:#343741;font-weight:400;font-family:'Liberation Mono', monospace;">Ticketcreation|000000a7b6b120e90000000992ffd6c0a3e88f53|Calling &#x27;create_TicketBegin&#x27;.</div>
<div class="t" style="left:1288.00px;top:893.88px;font-size:11.85px;color:#343741;font-weight:400;font-family:'Liberation Mono', monospace;">ticketsys</div>
<div class="t" style="left:1288.00px;top:911.08px;font-size:11.85px;color:#343741;font-weight:400;font-family:'Liberation Mono', monospace;">tem</div>
<div class="b" style="left:1.00px;top:864.00px;width:1373.00px;height:32.00px;background:linear-gradient(to bottom, rgba(255,255,255,0), rgba(255,255,255,0.55) 60%, rgba(255,255,255,0.97));"></div>
</body></html>
